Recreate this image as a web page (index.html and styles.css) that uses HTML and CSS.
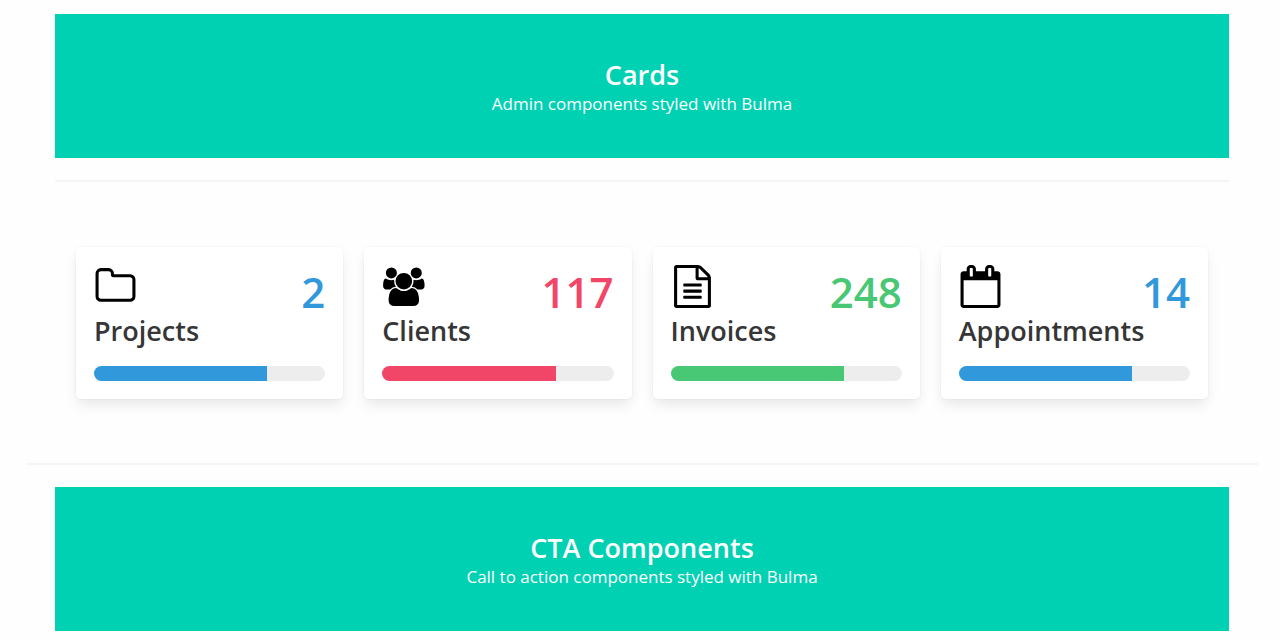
FILE: index.html
```html
<!DOCTYPE html>
<html lang="en">
<head>
<meta charset="utf-8">
<meta name="viewport" content="width=device-width, initial-scale=1">
<title>Admin components</title>
<link rel="stylesheet" href="styles.css">
</head>
<body>
<main class="page">
  <section class="section">
    <header class="hero">
      <h1 class="hero-title">Cards</h1>
      <p class="hero-subtitle">Admin components styled with Bulma</p>
    </header>
    <hr class="divider">
    <div class="cards">
      <article class="card is-info">
        <div class="card-top">
          <svg class="icon" viewBox="0 0 1792 1792" aria-hidden="true"><path d="M1600 1312v-704q0-40-28-68t-68-28h-704q-40 0-68-28t-28-68v-64q0-40-28-68t-68-28h-320q-40 0-68 28t-28 68v960q0 40 28 68t68 28h1216q40 0 68-28t28-68zm128-704v704q0 92-66 158t-158 66h-1216q-92 0-158-66t-66-158v-960q0-92 66-158t158-66h320q92 0 158 66t66 158v32h672q92 0 158 66t66 158z"/></svg>
          <span class="count">2</span>
        </div>
        <h2 class="card-title" id="projects">Projects</h2>
        <progress class="progress" value="75" max="100" aria-labelledby="projects">75%</progress>
      </article>
      <article class="card is-danger">
        <div class="card-top">
          <svg class="icon" viewBox="-50 -110 1990 1990" aria-hidden="true"><path d="M593 896q-162 5-265 128h-134q-82 0-138-40.5t-56-118.5q0-353 124-353 6 0 43.5 21t97.5 42.5 119 21.5q67 0 133-23-5 37-5 66 0 139 81 256zm1071 637q0 120-73 189.5t-194 69.5h-874q-121 0-194-69.5t-73-189.5q0-53 3.5-103.5t14-109 26.5-108.5 43-97.5 62-81 85.5-53.5 111.5-20q10 0 43 21.5t73 48 107 48 135 21.5 135-21.5 107-48 73-48 43-21.5q61 0 111.5 20t85.5 53.5 62 81 43 97.5 26.5 108.5 14 109 3.5 103.5zm-1024-1277q0 106-75 181t-181 75-181-75-75-181 75-181 181-75 181 75 75 181zm704 384q0 159-112.5 271.5t-271.5 112.5-271.5-112.5-112.5-271.5 112.5-271.5 271.5-112.5 271.5 112.5 112.5 271.5zm576 225q0 78-56 118.5t-138 40.5h-134q-103-123-265-128 81-117 81-256 0-29-5-66 66 23 133 23 59 0 119-21.5t97.5-42.5 43.5-21q124 0 124 353zm-128-609q0 106-75 181t-181 75-181-75-75-181 75-181 181-75 181 75 75 181z"/></svg>
          <span class="count">117</span>
        </div>
        <h2 class="card-title" id="clients">Clients</h2>
        <progress class="progress" value="75" max="100" aria-labelledby="clients">75%</progress>
      </article>
      <article class="card is-success">
        <div class="card-top">
          <svg class="icon" viewBox="0 0 1792 1792" aria-hidden="true"><path d="M1596 380q28 28 48 76t20 88v1152q0 40-28 68t-68 28h-1344q-40 0-68-28t-28-68v-1600q0-40 28-68t68-28h896q40 0 88 20t76 48zm-444-244v376h376q-10-29-22-41l-313-313q-12-12-41-22zm384 1528v-1024h-416q-40 0-68-28t-28-68v-416h-768v1536h1280zm-1024-864q0-14 9-23t23-9h704q14 0 23 9t9 23v64q0 14-9 23t-23 9h-704q-14 0-23-9t-9-23v-64zm736 224q14 0 23 9t9 23v64q0 14-9 23t-23 9h-704q-14 0-23-9t-9-23v-64q0-14 9-23t23-9h704zm0 256q14 0 23 9t9 23v64q0 14-9 23t-23 9h-704q-14 0-23-9t-9-23v-64q0-14 9-23t23-9h704z"/></svg>
          <span class="count">248</span>
        </div>
        <h2 class="card-title" id="invoices">Invoices</h2>
        <progress class="progress" value="75" max="100" aria-labelledby="invoices">75%</progress>
      </article>
      <article class="card is-info">
        <div class="card-top">
          <svg class="icon" viewBox="0 0 1792 1792" aria-hidden="true"><path d="M192 1664h1408v-1024h-1408v1024zm384-1216v-288q0-14-9-23t-23-9h-64q-14 0-23 9t-9 23v288q0 14 9 23t23 9h64q14 0 23-9t9-23zm768 0v-288q0-14-9-23t-23-9h-64q-14 0-23 9t-9 23v288q0 14 9 23t23 9h64q14 0 23-9t9-23zm384-64v1280q0 52-38 90t-90 38h-1408q-52 0-90-38t-38-90v-1280q0-52 38-90t90-38h128v-96q0-66 47-113t113-47h64q66 0 113 47t47 113v96h384v-96q0-66 47-113t113-47h64q66 0 113 47t47 113v96h128q52 0 90 38t38 90z"/></svg>
          <span class="count">14</span>
        </div>
        <h2 class="card-title" id="appointments">Appointments</h2>
        <progress class="progress" value="75" max="100" aria-labelledby="appointments">75%</progress>
      </article>
    </div>
  </section>
  <hr class="divider">
  <section class="section">
    <header class="hero">
      <h1 class="hero-title">CTA Components</h1>
      <p class="hero-subtitle">Call to action components styled with Bulma</p>
    </header>
  </section>
</main>
</body>
</html>
```
FILE: styles.css
```css
* {
  box-sizing: border-box;
}

body {
  margin: 0;
  background: #fefefe;
  color: #363636;
  font-family: "Segoe UI", "Open Sans", "Noto Sans", sans-serif;
}

h1,
h2,
p {
  margin: 0;
}

.page {
  padding: 14px 22px 9px 26px;
}

.section {
  padding: 0 29px;
}

.hero {
  padding: 43px 21px;
  background: #00d1b2;
  color: #fff;
  text-align: center;
}

.hero-title {
  font-size: 27px;
  font-weight: 600;
  line-height: 36px;
}

.hero-subtitle {
  font-size: 17px;
  line-height: 22px;
}

.divider {
  height: 2px;
  margin: 22px 0;
  border: 0;
  background: #f5f5f5;
}

.cards {
  display: grid;
  grid-template-columns: repeat(auto-fit, minmax(240px, 1fr));
  gap: 21px;
  padding: 43px 21px 42px;
}

.card {
  padding: 18px;
  border-radius: 5px;
  background: #fff;
  box-shadow: 0 7px 14px -2px rgba(10, 10, 10, 0.1), 0 0 0 1px rgba(10, 10, 10, 0.02);
}

.card-top {
  display: flex;
  justify-content: space-between;
  align-items: flex-start;
  height: 48px;
}

.icon {
  width: 43px;
  height: 43px;
  fill: #000;
}

.count {
  font-size: 42px;
  font-weight: 600;
  line-height: 54px;
}

.card-title {
  margin-bottom: 17px;
  font-size: 27px;
  font-weight: 600;
  line-height: 36px;
}

.progress {
  display: block;
  width: 100%;
  height: 15px;
  border: 0;
  border-radius: 8px;
  overflow: hidden;
  appearance: none;
  -webkit-appearance: none;
  background: #ededed;
}

.progress::-webkit-progress-bar {
  background: #ededed;
}

.progress::-webkit-progress-value {
  background: currentColor;
}

.progress::-moz-progress-bar {
  background: currentColor;
}

.is-info .count,
.is-info .progress {
  color: #3298dc;
}

.is-danger .count,
.is-danger .progress {
  color: #f14668;
}

.is-success .count,
.is-success .progress {
  color: #48c774;
}
```
